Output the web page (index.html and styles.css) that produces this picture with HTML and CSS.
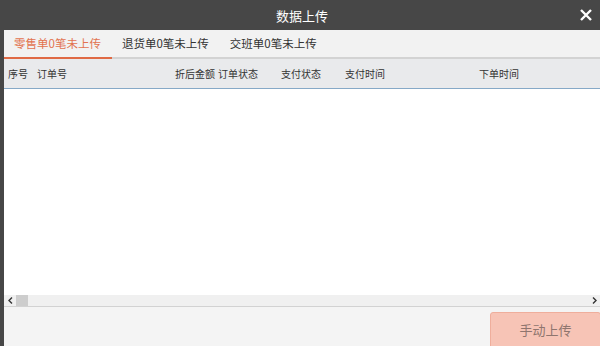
FILE: index.html
```html
<!DOCTYPE html>
<html lang="zh-CN">
<head>
    <meta charset="UTF-8">
    <meta name="viewport" content="width=device-width, initial-scale=1.0">
    <title>数据上传</title>
    <link rel="stylesheet" href="styles.css">
</head>
<body>
    <div class="dialog">
        <div class="titlebar">
            <span class="title">数据上传</span>
            <span class="close">
                <svg width="12" height="12" viewBox="0 0 12 12">
                    <path d="M1 1 L11 11 M11 1 L1 11" stroke="#fff" stroke-width="2.4" fill="none"/>
                </svg>
            </span>
        </div>

        <div class="content">
            <div class="tabs">
                <div class="tab active">零售单0笔未上传</div>
                <div class="tab">退货单0笔未上传</div>
                <div class="tab">交班单0笔未上传</div>
            </div>

            <div class="table-head">
                <span>序号</span>
                <span>订单号</span>
                <span>折后金额</span>
                <span>订单状态</span>
                <span>支付状态</span>
                <span>支付时间</span>
                <span>下单时间</span>
            </div>

            <div class="table-body"></div>

            <div class="hscroll">
                <span class="arrow">
                    <svg width="5" height="7" viewBox="0 0 5 7"><path d="M4 0.5 L1 3.5 L4 6.5" stroke="#333" stroke-width="1.4" fill="none"/></svg>
                </span>
                <span class="thumb"></span>
                <span class="track"></span>
                <span class="arrow">
                    <svg width="5" height="7" viewBox="0 0 5 7"><path d="M1 0.5 L4 3.5 L1 6.5" stroke="#333" stroke-width="1.4" fill="none"/></svg>
                </span>
            </div>

            <div class="footer">
                <button class="upload-btn">手动上传</button>
            </div>
        </div>
    </div>
</body>
</html>
```

FILE: styles.css
```css
* {
    margin: 0;
    padding: 0;
    box-sizing: border-box;
}

body {
    font-family: "Noto Sans CJK SC", "Noto Sans", sans-serif;
    width: 600px;
    height: 346px;
    overflow: hidden;
    background: #f4f4f4;
    color: #333;
}

.dialog {
    display: flex;
    flex-direction: column;
    height: 346px;
}

.titlebar {
    position: relative;
    height: 30px;
    background: #474747;
    display: flex;
    align-items: center;
    justify-content: center;
    padding-left: 4px;
}

.title {
    color: #fff;
    font-size: 13px;
}

.close {
    position: absolute;
    right: 8px;
    top: 9px;
    display: flex;
}

.content {
    flex: 1;
    display: flex;
    flex-direction: column;
    border-left: 4px solid #474747;
    min-height: 0;
}

.tabs {
    display: flex;
    height: 29px;
    background: #f2f2f2;
    border-bottom: 2px solid #d3d3d3;
}

.tab {
    padding: 0 11px 0 10px;
    font-size: 11.5px;
    line-height: 27px;
    color: #333;
    border-bottom: 2px solid transparent;
    margin-bottom: -2px;
}

.tab.active {
    color: #e2734f;
    border-bottom-color: #e06a45;
}

.table-head {
    display: grid;
    grid-template-columns: 29px 138px 43px 63px 64px 134px 1fr;
    align-items: center;
    height: 30px;
    padding-left: 4px;
    background: #e9eaec;
    border-bottom: 1px solid #86a9c7;
    font-size: 10px;
    color: #333;
}

.table-body {
    flex: 1;
    background: #fff;
}

.hscroll {
    display: flex;
    align-items: stretch;
    height: 12px;
    background: #f0f0f0;
    border-bottom: 1px solid #d2d2d2;
}

.arrow {
    width: 12px;
    display: flex;
    align-items: center;
    justify-content: center;
}

.thumb {
    width: 12px;
    background: #cdcdcd;
}

.track {
    flex: 1;
}

.footer {
    height: 39px;
    display: flex;
    justify-content: flex-end;
    align-items: flex-start;
    padding-top: 5px;
    overflow: hidden;
    background: #f4f4f4;
}

.upload-btn {
    width: 111px;
    height: 38px;
    background: #f7c4b6;
    border: 1px solid #efae9c;
    border-radius: 3px;
    color: #8f756e;
    font-family: inherit;
    font-size: 13px;
    padding-bottom: 4px;
    margin-right: -1px;
}
```
